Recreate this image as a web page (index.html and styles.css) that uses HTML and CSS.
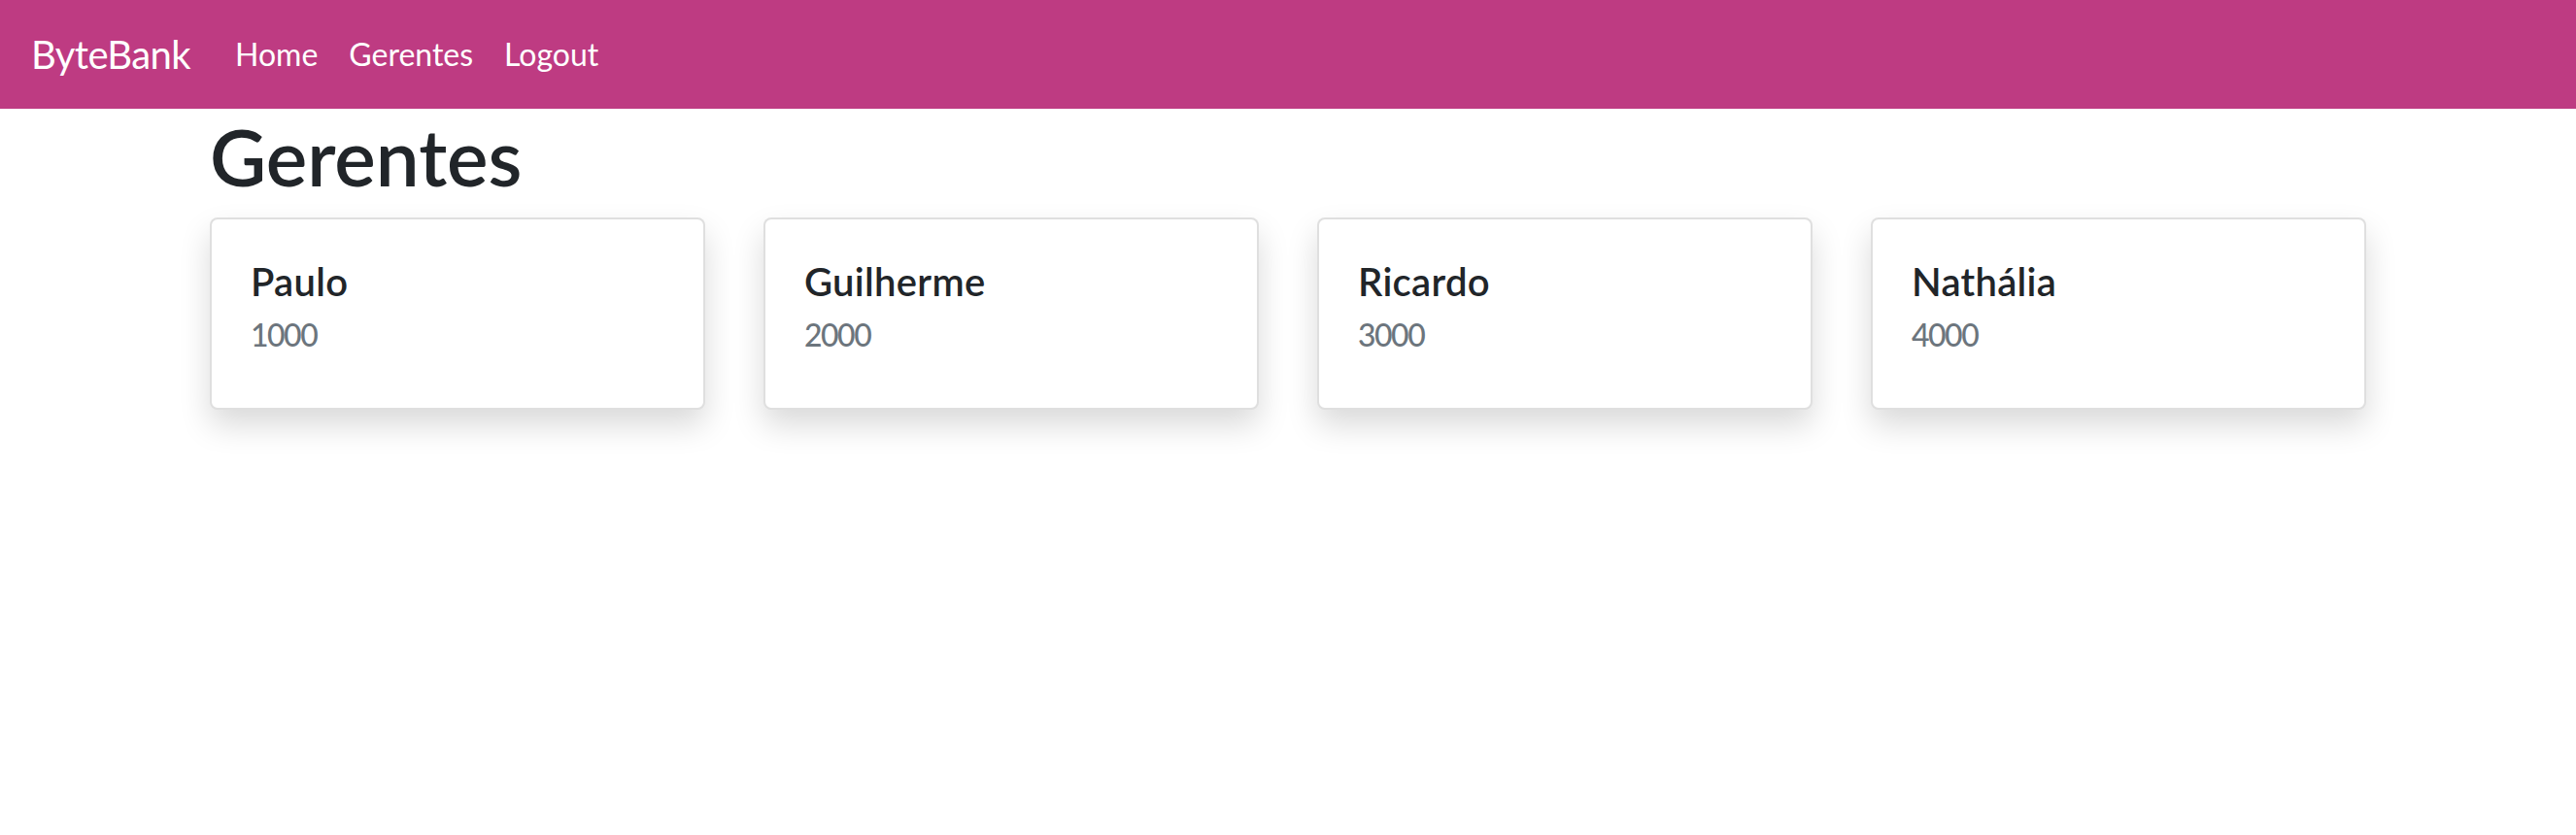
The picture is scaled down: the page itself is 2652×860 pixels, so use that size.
FILE: index.html
```html
<!DOCTYPE html>
<html lang="pt-BR">
<head>
<meta charset="utf-8">
<title>ByteBank</title>
<link rel="stylesheet" href="styles.css">
</head>
<body>
<nav class="navbar">
  <a class="brand" href="#">ByteBank</a>
  <ul class="nav">
    <li><a class="nav-link" href="#">Home</a></li>
    <li><a class="nav-link" href="#">Gerentes</a></li>
    <li><a class="nav-link" href="#">Logout</a></li>
  </ul>
</nav>
<main class="container">
  <h1 class="page-title">Gerentes</h1>
  <div class="cards">
    <div class="card"><div class="card-body"><h5 class="card-title">Paulo</h5><h6 class="card-subtitle">1000</h6></div></div>
    <div class="card"><div class="card-body"><h5 class="card-title">Guilherme</h5><h6 class="card-subtitle">2000</h6></div></div>
    <div class="card"><div class="card-body"><h5 class="card-title">Ricardo</h5><h6 class="card-subtitle">3000</h6></div></div>
    <div class="card"><div class="card-body"><h5 class="card-title">Nathália</h5><h6 class="card-subtitle">4000</h6></div></div>
  </div>
</main>
</body>
</html>
```

FILE: styles.css
```css
* { box-sizing: border-box; }
html, body { margin: 0; padding: 0; }
body {
  min-height: 100vh;
  font-family: "Segoe UI", Lato, sans-serif;
  font-size: 32px;
  line-height: 1.5;
  color: #212529;
  background: #fff;
}
.navbar {
  display: flex;
  align-items: center;
  height: 112px;
  padding: 16px 32px;
  background: #be3b82;
}
.brand {
  color: #fff;
  text-decoration: none;
  font-size: 40px;
  line-height: 60px;
  letter-spacing: -0.6px;
  padding: 10px 0;
  margin-right: 30px;
}
.nav {
  display: flex;
  list-style: none;
  margin: 0;
  padding: 0;
}
.nav-link {
  display: block;
  color: #fff;
  text-decoration: none;
  font-size: 32px;
  line-height: 48px;
  padding: 16px 16px;
}
.container {
  width: 2280px;
  margin: 0 auto;
  padding: 0 30px 80px;
}
.page-title {
  margin: 0 0 16px;
  padding-top: 2px;
  height: 96px;
  font-size: 80px;
  font-weight: 600;
  line-height: 94px;
}
.cards {
  display: grid;
  grid-template-columns: repeat(4, 1fr);
  column-gap: 60px;
}
.card {
  background: #fff;
  border: 2px solid rgba(0,0,0,.125);
  border-radius: 8px;
  box-shadow: 0 16px 32px rgba(0,0,0,.15);
}
.card-body { padding: 40px; }
.card-title {
  margin: 0 0 24px;
  font-size: 40px;
  font-weight: 600;
  line-height: 1.2;
  letter-spacing: 0.3px;
}
.card-subtitle {
  margin: -12px 0 16px;
  font-size: 32px;
  font-weight: 500;
  line-height: 1.2;
  letter-spacing: -1.5px;
  color: #6c757d;
}
```
